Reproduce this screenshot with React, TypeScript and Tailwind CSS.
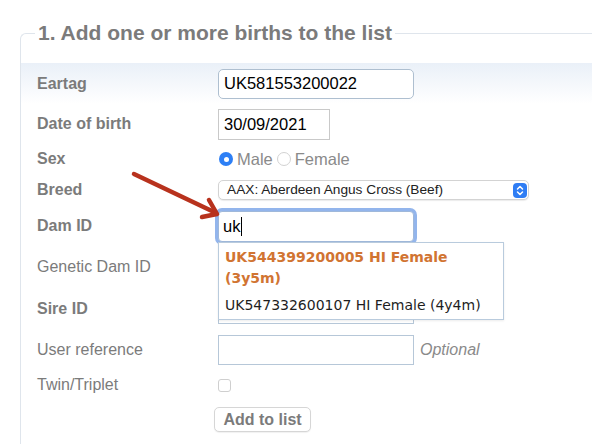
import React from 'react';

const labelBold = 'w-[181px] shrink-0 text-[16px] font-bold text-[#7b7b7b]';
const labelNormal = 'w-[181px] shrink-0 text-[16px] text-[#7b7b7b]';

const Row = ({ h, className = '', children }: { h: string; className?: string; children: React.ReactNode }) => (
  <div className={`flex items-center pl-[16px] ${h} ${className}`}>{children}</div>
);

const App = () => {
  return (
    <div
      className="relative w-[592px] h-[444px] overflow-hidden bg-white"
      style={{ fontFamily: '"Liberation Sans", Arial, sans-serif' }}
    >
      <fieldset className="ml-[20px] mt-[21px] w-[600px] h-[480px] border-t border-l border-[#dfe5ec] rounded-tl-[6px] p-0">
        <legend className="ml-[14px] px-[3px] text-[21px] leading-[24px] font-bold text-[#7b7b7b]">
          1. Add one or more births to the list
        </legend>

        <div className="mt-[18px]">
          {/* Eartag */}
          <Row h="h-[41px]" className="bg-gradient-to-b from-[#eaf0f8] to-white">
            <span className={labelBold}>Eartag</span>
            <div className="w-[196px] h-[30px] rounded-[5px] border border-[#aebfd0] bg-white flex items-center px-[5px] text-[16.5px] text-black">
              UK581553200022
            </div>
          </Row>

          {/* Date of birth */}
          <Row h="h-[40px]">
            <span className={labelBold}>Date of birth</span>
            <div className="w-[112px] h-[31px] border border-[#c9c9c9] bg-white flex items-center px-[5px] text-[16.5px] text-black">
              30/09/2021
            </div>
          </Row>

          {/* Sex */}
          <Row h="h-[30px]">
            <span className={labelBold}>Sex</span>
            <div className="flex items-center text-[16.5px] text-[#8a8a8a]">
              <span className="ml-[1px] w-[14px] h-[14px] rounded-full bg-[#2d7ff5] flex items-center justify-center">
                <span className="w-[5px] h-[5px] rounded-full bg-white" />
              </span>
              <span className="ml-[4px]">Male</span>
              <span className="ml-[4px] w-[14px] h-[14px] rounded-full border border-[#d2d2d2] bg-white" />
              <span className="ml-[4px]">Female</span>
            </div>
          </Row>

          {/* Breed */}
          <Row h="h-[32px]">
            <span className={labelBold}>Breed</span>
            <div className="w-[311px] h-[20px] rounded-[5px] border border-[#d3d3d3] bg-white shadow-[0_1px_1px_rgba(0,0,0,0.08)] flex items-center justify-between pl-[8px] pr-[1px] text-[13.7px] text-[#222]">
              <span>AAX: Aberdeen Angus Cross (Beef)</span>
              <span className="w-[14px] h-[15px] rounded-[4px] bg-[#2f7df4] flex items-center justify-center">
                <svg width="8" height="11" viewBox="0 0 8 11" fill="none" stroke="white" strokeWidth="1.5" strokeLinecap="round" strokeLinejoin="round">
                  <path d="M1.5 4 L4 1.5 L6.5 4" />
                  <path d="M1.5 7 L4 9.5 L6.5 7" />
                </svg>
              </span>
            </div>
          </Row>

          {/* Dam ID */}
          <Row h="h-[40px]">
            <span className={labelBold}>Dam ID</span>
            <div className="w-[196px] h-[31px] rounded-[4px] border border-[#9fb8da] bg-white ring-[3px] ring-[#93b5ec] flex items-center px-[4px] text-[16.5px] text-black">
              uk
              <span className="ml-[1px] w-px h-[19px] bg-black" />
            </div>
          </Row>

          {/* Genetic Dam ID */}
          <Row h="h-[42px]">
            <span className={labelNormal}>Genetic Dam ID</span>
            <div className="w-[196px] h-[30px] border border-[#b6c7d8] bg-white" />
          </Row>

          {/* Sire ID */}
          <Row h="h-[41px]">
            <span className={labelBold}>Sire ID</span>
            <div className="w-[196px] h-[30px] border border-[#b6c7d8] bg-white" />
          </Row>

          {/* User reference */}
          <Row h="h-[41px]">
            <span className={labelNormal}>User reference</span>
            <div className="w-[196px] h-[30px] border border-[#b6c7d8] bg-white" />
            <span className="ml-[6px] text-[16px] italic text-[#8a8a8a]">Optional</span>
          </Row>

          {/* Twin/Triplet */}
          <Row h="h-[30px]">
            <span className={labelNormal}>Twin/Triplet</span>
            <span className="w-[13px] h-[13px] rounded-[3px] border border-[#cfcfcf] bg-white" />
          </Row>

          {/* Add button */}
          <Row h="h-[38px]">
            <span className="w-[177px] shrink-0" />
            <button className="w-[97px] h-[25px] rounded-[5px] border border-[#d6d6d6] bg-white shadow-[0_1px_1px_rgba(0,0,0,0.06)] text-[16px] font-bold text-[#7b7b7b]">
              Add to list
            </button>
          </Row>
        </div>
      </fieldset>

      {/* Autocomplete menu */}
      <div
        className="absolute left-[218px] top-[242px] w-[286px] border border-[#b9cbdd] bg-white shadow-[0_1px_2px_rgba(0,0,0,0.08)] text-[14px] leading-[21px]"
        style={{ fontFamily: '"DejaVu Sans", Verdana, sans-serif' }}
      >
        <div className="px-[6px] pt-[4px] pb-[3px] font-bold text-[#d17432]">UK544399200005 HI Female (3y5m)</div>
        <div className="px-[6px] pt-[3px] pb-[3px] text-[#1e1e1e]">UK547332600107 HI Female (4y4m)</div>
      </div>

      {/* Annotation arrow */}
      <svg className="absolute left-0 top-0 pointer-events-none" width="592" height="444">
        <g stroke="#b8321d" strokeWidth="4.5" strokeLinecap="round" strokeLinejoin="round" fill="none">
          <path d="M134 174 L214 212" />
          <path d="M209 200 L217 214 L202 217" />
        </g>
      </svg>
    </div>
  );
};

export default App;
